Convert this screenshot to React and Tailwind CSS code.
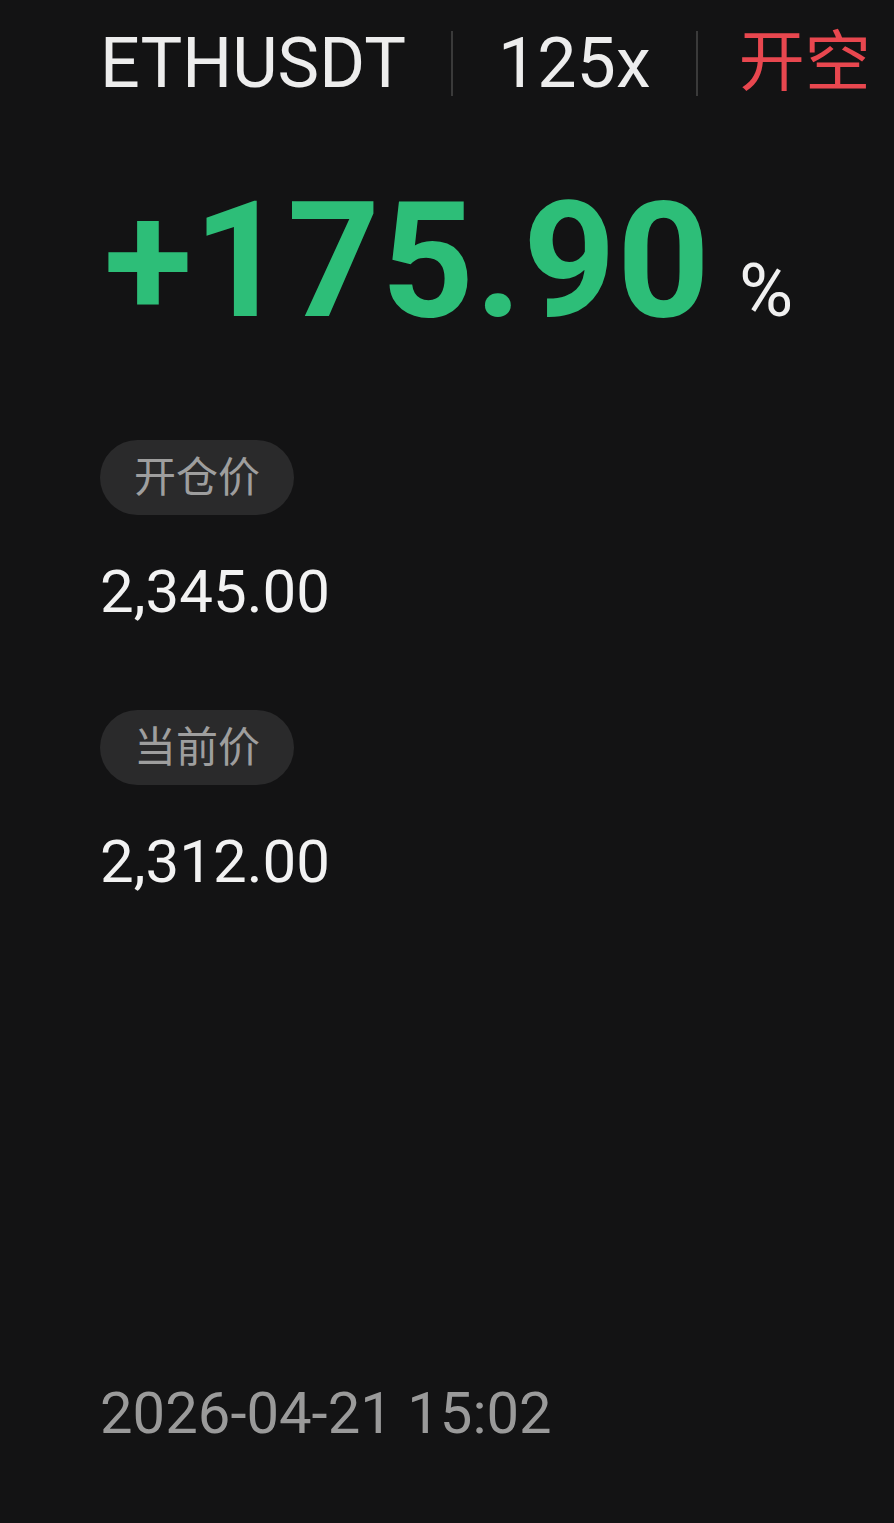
import React from 'react';

const font = { fontFamily: 'Roboto, "Noto Sans CJK SC", sans-serif' };

function Pill({ children }) {
  return (
    <div className="inline-flex h-[75px] px-[34px] rounded-full bg-[#2a2a2b] items-center text-[42px] leading-none text-[#9e9e9e]">
      {children}
    </div>
  );
}

export default function App() {
  return (
    <div className="min-h-screen w-full bg-[#131314] text-[#f2f2f2]" style={font}>
      <div className="flex flex-col items-start pl-[100px] pt-[28px]">
        <div className="flex items-center gap-[45px] whitespace-nowrap">
          <span className="text-[70px] leading-none text-[#ededed]">ETHUSDT</span>
          <span className="w-[2px] h-[65px] bg-[#3a3a3a]" />
          <span className="text-[70px] leading-none text-[#ededed]">125x</span>
          <span className="w-[2px] h-[65px] bg-[#3a3a3a]" />
          <span className="text-[66px] leading-none text-[#e8474f] -ml-[4px]">开空</span>
        </div>

        <div className="flex items-baseline mt-[82px] ml-[4px] whitespace-nowrap">
          <span className="text-[162px] leading-none font-bold text-[#2dbe78] tracking-[1px]">+175.90</span>
          <span className="text-[74px] leading-none text-[#f0f0f0] ml-[28px]">%</span>
        </div>

        <div className="mt-[98px]">
          <Pill>开仓价</Pill>
        </div>
        <div className="mt-[47px] text-[60px] leading-none">2,345.00</div>

        <div className="mt-[88px]">
          <Pill>当前价</Pill>
        </div>
        <div className="mt-[47px] text-[60px] leading-none">2,312.00</div>

        <div className="mt-[492px] text-[58px] leading-none text-[#9a9a9a]">2026-04-21 15:02</div>
      </div>
    </div>
  );
}
